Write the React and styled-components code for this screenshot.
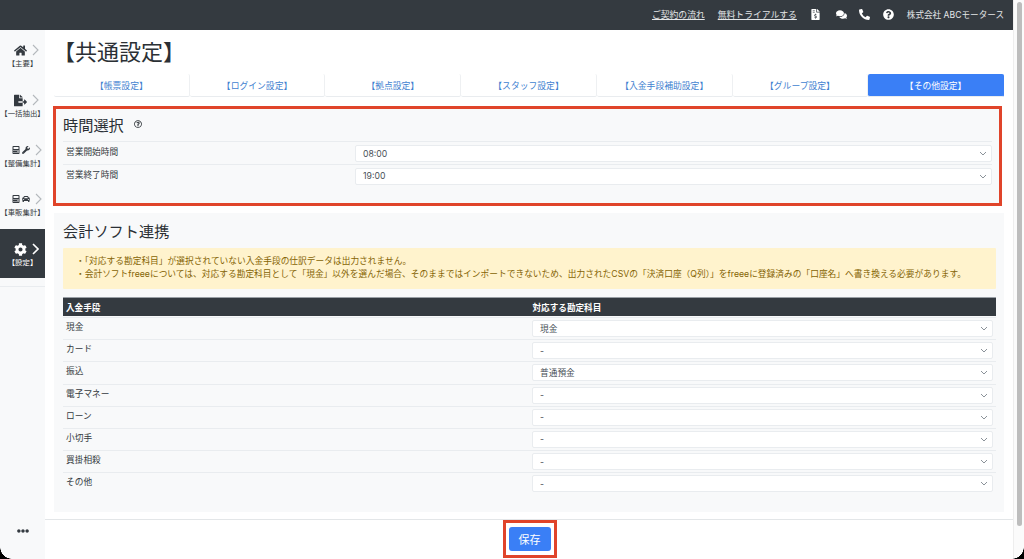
import React from "react";
import styled, { createGlobalStyle } from "styled-components";
import {
  FaHome,
  FaFileExport,
  FaCalculator,
  FaWrench,
  FaCar,
  FaCog,
  FaFileInvoiceDollar,
  FaComments,
  FaPhoneAlt,
  FaQuestionCircle,
  FaRegQuestionCircle,
  FaEllipsisH,
} from "react-icons/fa";

const FONT = `Inter, "Noto Sans CJK JP", sans-serif`;

const GlobalStyle = createGlobalStyle`
  html, body {
    margin: 0;
    padding: 0;
    height: 559px;
    overflow: hidden;
    background: #fff;
  }
  * { box-sizing: border-box; }
  body {
    font-family: ${FONT};
    color: #343a40;
  }
`;

const Page = styled.div`
  position: relative;
  display: flex;
  width: 1024px;
  height: 559px;
  overflow: hidden;
`;
const Shell = styled.div`
  width: 1013px;
  display: flex;
  flex-direction: column;
`;
const TopBar = styled.header`
  height: 30px;
  flex: none;
  background: #343a40;
  display: flex;
  align-items: center;
  justify-content: flex-end;
  padding: 0 9px 2px 0;
  color: #e4e6e8;
  font-size: 8.6px;
`;
const TopLink = styled.a`
  color: #e4e6e8;
  text-decoration: underline;
  font-size: 8.8px;
  margin-right: 13px;
`;
const TopIcon = styled.span`
  display: flex;
  color: #fff;
  font-size: 11px;
  margin-right: ${(p) => p.$mr || 13}px;
`;
const Body = styled.div`
  flex: 1;
  display: flex;
  min-height: 0;
`;
const Sidebar = styled.nav`
  width: 45px;
  flex: none;
  background: #f8f9fa;
  display: flex;
  flex-direction: column;
`;
const SideItems = styled.div`
  border-bottom: 1px solid #e9ecef;
  padding-bottom: 8px;
`;
const SideItem = styled.div`
  height: 49.7px;
  display: flex;
  flex-direction: column;
  align-items: center;
  justify-content: center;
  padding-top: 3px;
  background: ${(p) => (p.$active ? "#343a40" : "transparent")};
  color: ${(p) => (p.$active ? "#fff" : "#343a40")};
`;
const SideIconRow = styled.div`
  display: flex;
  align-items: center;
  gap: 5px;
  height: 14px;
  margin-left: 8px;
  font-size: ${(p) => p.$size || 12}px;
  svg.small { font-size: 8px; }
`;
const SideArrow = styled.svg`
  width: 7px;
  height: 12px;
  fill: none;
  stroke: ${(p) => (p.$active ? "#fff" : "#b4b8bc")};
  stroke-width: ${(p) => (p.$active ? 1.6 : 1.1)};
`;
const SideLabel = styled.div`
  font-size: 7.4px;
  line-height: 10px;
  margin-top: 2px;
  white-space: nowrap;
`;
const Dots = styled.div`
  margin-top: auto;
  margin-bottom: 22px;
  display: flex;
  justify-content: center;
  color: #343a40;
  font-size: 12px;
`;
const Content = styled.main`
  flex: 1;
  min-width: 0;
  display: flex;
  flex-direction: column;
`;
const Scroll = styled.div`
  flex: 1;
  min-height: 0;
  overflow: hidden;
  padding: 8px 9px 0 9px;
`;
const Title = styled.h1`
  margin: 0 0 8px -1px;
  height: 28px;
  font-size: 22px;
  line-height: 28px;
  font-weight: 400;
  color: #2b3035;
`;
const Tabs = styled.div`
  display: grid;
  grid-template-columns: repeat(7, 1fr);
  height: 23px;
  margin-bottom: 9px;
`;
const Tab = styled.div`
  display: flex;
  align-items: center;
  justify-content: center;
  font-size: 8.8px;
  border-radius: 2px;
  color: ${(p) => (p.$active ? "#fff" : "#3f7fd0")};
  background: ${(p) => (p.$active ? "#3a7ff6" : "#fff")};
  border-bottom: 1px solid #e9ecef;
  border-right: 1px solid ${(p) => (p.$active ? "#3a7ff6" : "#eef0f2")};
`;
const Card = styled.section`
  background: #f8f9fa;
  padding: ${(p) => (p.$boxed ? "3px 7px 0 7px" : "5px 8px 0 9px")};
  height: ${(p) => p.$h}px;
  margin-bottom: ${(p) => p.$mb || 0}px;
  width: ${(p) => (p.$boxed ? "949px" : "950px")};
  margin-left: ${(p) => (p.$boxed ? "-1px" : "0")};
  border: ${(p) => (p.$boxed ? "3px solid #e0442a" : "none")};
`;
const SectionTitle = styled.h2`
  margin: 0 0 ${(p) => p.$mb || 0}px 0;
  height: 24px;
  display: flex;
  align-items: center;
  gap: 10px;
  font-size: 15.2px;
  font-weight: 400;
  color: #2b3035;
  svg { font-size: 8px; }
`;
const FormRow = styled.div`
  display: grid;
  grid-template-columns: ${(p) => p.$col}px 1fr;
  height: ${(p) => p.$h}px;
  border-top: 1px solid #e9ecef;
  align-items: start;
`;
const RowLabel = styled.div`
  font-size: 8.7px;
  line-height: 12px;
  padding: ${(p) => p.$pt}px 0 0 3px;
  color: #343a40;
`;
const Select = styled.div`
  height: 17px;
  margin: ${(p) => p.$mt}px ${(p) => p.$mr}px 0 0;
  background: #fff;
  border: 1px solid #e9ecef;
  border-radius: 2px;
  display: flex;
  align-items: center;
  justify-content: space-between;
  padding: 0 4px 0 7px;
  font-size: 8.7px;
  color: #495057;
`;
const Chevron = styled.svg`
  width: 8px;
  height: 5px;
  fill: none;
  stroke: #8b9299;
  stroke-width: 1;
`;
const Alert = styled.div`
  margin: 6px 0 8px 0;
  height: 41px;
  background: #fff3cd;
  color: #856404;
  font-size: 8.72px;
  line-height: 13px;
  padding: 7px 0 0 13px;
  border-radius: 1px;
`;
const TableHead = styled.div`
  display: grid;
  grid-template-columns: 466.5px 1fr;
  height: 19px;
  align-items: center;
  background: #343a40;
  border-top: 1px solid #9aa0a6;
  color: #fff;
  font-size: 8.6px;
  font-weight: 700;
  padding-left: 3px;
  margin-bottom: 1px;
`;
const Footer = styled.footer`
  height: 40px;
  flex: none;
  border-top: 1px solid #e3e6e8;
  display: flex;
  justify-content: center;
`;
const SaveFrame = styled.div`
  border: 3px solid #e0442a;
  padding: 4px 3px;
  height: 38px;
  width: 54px;
  margin-left: 1px;
`;
const SaveButton = styled.button`
  width: 100%;
  height: 100%;
  border: none;
  border-radius: 3px;
  background: #3a7ff6;
  color: #fff;
  font-family: ${FONT};
  font-size: 11px;
  padding: 0;
`;
const ScrollTrack = styled.div`
  width: 11px;
  flex: none;
  background: #fbfbfb;
  border-left: 1px solid #eeeeee;
  padding: 2px 2px 0 3px;
`;
const ScrollThumb = styled.div`
  height: 524px;
  border-radius: 3px;
  background: #bdbdbd;
`;
const Corner = styled.div`
  position: absolute;
  bottom: 0;
  ${(p) => (p.$right ? "right: 0;" : "left: 0;")}
  width: 12px;
  height: 12px;
  background: radial-gradient(
    circle at ${(p) => (p.$right ? "0 0" : "100% 0")},
    transparent 11.5px,
    #000 12px
  );
`;

const tabs = ["【帳票設定】", "【ログイン設定】", "【拠点設定】", "【スタッフ設定】", "【入金手段補助設定】", "【グループ設定】", "【その他設定】"];
const payments = [
  ["現金", "現金"],
  ["カード", "-"],
  ["振込", "普通預金"],
  ["電子マネー", "-"],
  ["ローン", "-"],
  ["小切手", "-"],
  ["買掛相殺", "-"],
  ["その他", "-"],
];

function SelectBox({ value, mt, mr }) {
  return (
    <Select $mt={mt} $mr={mr}>
      {value}
      <Chevron viewBox="0 0 8 5"><path d="M1 1l3 3 3-3" /></Chevron>
    </Select>
  );
}

function SideEntry({ icons, label, active, size }) {
  return (
    <SideItem $active={active}>
      <SideIconRow $size={size}>
        {icons}
        <SideArrow $active={active} viewBox="0 0 7 12"><path d="M1 1l5 5-5 5" /></SideArrow>
      </SideIconRow>
      <SideLabel>{label}</SideLabel>
    </SideItem>
  );
}

export default function App() {
  return (
    <Page>
      <GlobalStyle />
      <Shell>
        <TopBar>
          <TopLink>ご契約の流れ</TopLink>
          <TopLink>無料トライアルする</TopLink>
          <TopIcon $mr={15}><FaFileInvoiceDollar /></TopIcon>
          <TopIcon $mr={12}><FaComments /></TopIcon>
          <TopIcon $mr={13}><FaPhoneAlt /></TopIcon>
          <TopIcon $mr={13}><FaQuestionCircle /></TopIcon>
          <span>株式会社 ABCモータース</span>
        </TopBar>
        <Body>
          <Sidebar>
            <SideItems>
              <SideEntry icons={<FaHome />} label="【主要】" size={13} />
              <SideEntry icons={<FaFileExport />} label="【一括抽出】" size={13} />
              <SideEntry icons={<><FaCalculator className="small" /><FaWrench className="small" style={{ marginLeft: -3 }} /></>} label="【整備集計】" />
              <SideEntry icons={<><FaCalculator className="small" /><FaCar className="small" style={{ marginLeft: -3 }} /></>} label="【車販集計】" />
              <SideEntry icons={<FaCog />} label="【設定】" active size={13} />
            </SideItems>
            <Dots><FaEllipsisH /></Dots>
          </Sidebar>
          <Content>
            <Scroll>
              <Title>【共通設定】</Title>
              <Tabs>
                {tabs.map((t, i) => (
                  <Tab key={t} $active={i === tabs.length - 1}>{t}</Tab>
                ))}
              </Tabs>
              <Card $boxed $h={100} $mb={7}>
                <SectionTitle $mb={5}>時間選択<FaRegQuestionCircle /></SectionTitle>
                <FormRow $col={292} $h={22.5}>
                  <RowLabel $pt={4}>営業開始時間</RowLabel>
                  <SelectBox value="08:00" mt={3} mr={0} />
                </FormRow>
                <FormRow $col={292} $h={22.5}>
                  <RowLabel $pt={4}>営業終了時間</RowLabel>
                  <SelectBox value="19:00" mt={3} mr={0} />
                </FormRow>
              </Card>
              <Card $h={299}>
                <SectionTitle>会計ソフト連携</SectionTitle>
                <Alert>
                  ・「対応する勘定科目」が選択されていない入金手段の仕訳データは出力されません。<br />
                  ・会計ソフトfreeeについては、対応する勘定科目として「現金」以外を選んだ場合、そのままではインポートできないため、出力されたCSVの「決済口座（Q列）」をfreeeに登録済みの「口座名」へ書き換える必要があります。
                </Alert>
                <TableHead>
                  <span>入金手段</span>
                  <span>対応する勘定科目</span>
                </TableHead>
                {payments.map(([name, value]) => (
                  <FormRow key={name} $col={469} $h={22.2}>
                    <RowLabel $pt={3}>{name}</RowLabel>
                    <SelectBox value={value} mt={2} mr={3} />
                  </FormRow>
                ))}
              </Card>
            </Scroll>
            <Footer>
              <SaveFrame>
                <SaveButton>保存</SaveButton>
              </SaveFrame>
            </Footer>
          </Content>
        </Body>
      </Shell>
      <ScrollTrack><ScrollThumb /></ScrollTrack>
      <Corner />
      <Corner $right />
    </Page>
  );
}
